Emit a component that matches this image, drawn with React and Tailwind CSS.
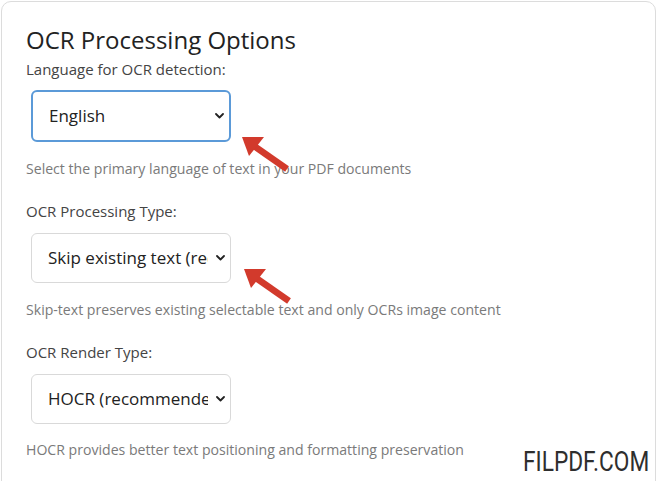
import React from "react";

const font = { fontFamily: '"Open Sans", "Noto Sans", sans-serif' };

function Chevron() {
  return (
    <svg width="9" height="6" viewBox="0 0 9 6" className="shrink-0">
      <polyline points="1,1 4.5,4.5 8,1" fill="none" stroke="#222" strokeWidth="1.8" strokeLinecap="round" strokeLinejoin="round" />
    </svg>
  );
}

function Select({ text, focused }) {
  return (
    <div
      className={
        "ml-[5px] w-[200px] flex items-center pl-[16px] pr-[5px] rounded-[6px] bg-white " +
        (focused ? "h-[52px] border-2 border-[#5b9ad8]" : "h-[50px] border border-[#d9d9d9]")
      }
    >
      <span className="w-[160px] overflow-hidden whitespace-nowrap text-[17px] text-[#222]">{text}</span>
      <span className="flex-1" />
      <Chevron />
    </div>
  );
}

function Arrow({ className }) {
  return (
    <svg className={"absolute " + className} width="52" height="40" viewBox="0 0 52 40">
      <line x1="47" y1="35" x2="14" y2="12" stroke="#d23a2c" strokeWidth="6.5" strokeLinecap="butt" />
      <polygon points="2,3 24,3 9,22" fill="#d23a2c" />
    </svg>
  );
}

export default function App() {
  return (
    <div className="relative w-[658px] h-[481px] bg-white overflow-hidden" style={font}>
      <div className="mt-[1px] ml-[1px] w-[655px] h-[520px] border border-[#dcdcdc] rounded-[10px] pl-[24px] pt-[21px]">
        <h2 className="text-[24px] leading-[34px] text-[#222]">OCR Processing Options</h2>
        <div className="mt-[2px] text-[15px] leading-[20px] text-[#444]">Language for OCR detection:</div>
        <div className="mt-[11px]">
          <Select text="English" focused />
        </div>
        <div className="mt-[17px] text-[14.1px] leading-[20px] text-[#7a7a7a]">Select the primary language of text in your PDF documents</div>

        <div className="mt-[22px] text-[15px] leading-[20px] text-[#444]">OCR Processing Type:</div>
        <div className="mt-[12px]">
          <Select text="Skip existing text (recommended)" />
        </div>
        <div className="mt-[17px] text-[14.1px] leading-[20px] text-[#7a7a7a]">Skip-text preserves existing selectable text and only OCRs image content</div>

        <div className="mt-[22px] text-[15px] leading-[20px] text-[#444]">OCR Render Type:</div>
        <div className="mt-[12px]">
          <Select text="HOCR (recommended)" />
        </div>
        <div className="mt-[16px] text-[14.1px] leading-[20px] text-[#7a7a7a]">HOCR provides better text positioning and formatting preservation</div>
      </div>

      <Arrow className="left-[240px] top-[134px]" />
      <Arrow className="left-[242px] top-[266px]" />

      <div
        className="absolute left-[523px] top-[445px] text-[27px] leading-[34px] text-[#2e2e2e] origin-left scale-x-[0.84] whitespace-nowrap"
        style={{ fontFamily: 'Roboto, sans-serif' }}
      >
        FILPDF.COM
      </div>
    </div>
  );
}
